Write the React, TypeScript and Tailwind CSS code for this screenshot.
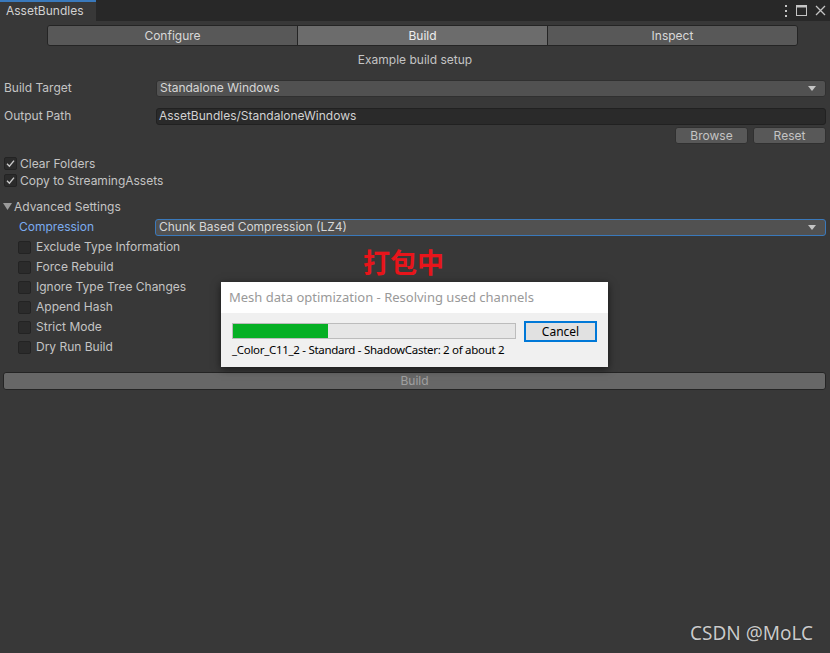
import React from "react";

function Check({ checked }: { checked?: boolean }) {
  return (
    <div className="flex h-[13px] w-[13px] items-center justify-center rounded-[2px] border border-[#232323] bg-[#2b2b2b]">
      {checked ? (
        <svg width="9" height="9" viewBox="0 0 9 9">
          <path d="M1 4.8 L3.4 7.2 L8 1.6" fill="none" stroke="#c8c8c8" strokeWidth="1.4" />
        </svg>
      ) : null}
    </div>
  );
}

function Arrow() {
  return (
    <svg width="8" height="5" viewBox="0 0 8 5" className="mr-[4px]">
      <path d="M0 0 H8 L4 5 Z" fill="#c4c4c4" />
    </svg>
  );
}

const options = [
  "Exclude Type Information",
  "Force Rebuild",
  "Ignore Type Tree Changes",
  "Append Hash",
  "Strict Mode",
  "Dry Run Build",
];

export default function App() {
  return (
    <div
      className="relative h-[653px] w-[830px] overflow-hidden bg-[#383838] text-[12px] text-[#c4c4c4]"
      style={{ fontFamily: "Inter, 'Liberation Sans', sans-serif" }}
    >
      {/* window tab bar */}
      <div className="flex h-[21px] items-stretch bg-[#282828]">
        <div className="w-[96px] border-t-2 border-[#3a79bb] bg-[#383838] pl-[6px] leading-[18px] text-[#d2d2d2]">
          AssetBundles
        </div>
        <div className="flex-1" />
        <div className="flex items-center gap-[8px] pr-[4px]">
          <svg width="4" height="12" viewBox="0 0 4 12">
            <rect x="1" y="0" width="2" height="2" fill="#c4c4c4" />
            <rect x="1" y="5" width="2" height="2" fill="#c4c4c4" />
            <rect x="1" y="10" width="2" height="2" fill="#c4c4c4" />
          </svg>
          <svg width="11" height="11" viewBox="0 0 11 11">
            <rect x="0.5" y="0.5" width="10" height="10" fill="none" stroke="#c4c4c4" />
            <rect x="0" y="0" width="11" height="2.5" fill="#c4c4c4" />
          </svg>
          <svg width="11" height="11" viewBox="0 0 11 11">
            <path d="M1 1 L10 10 M10 1 L1 10" stroke="#c4c4c4" strokeWidth="1.3" />
          </svg>
        </div>
      </div>

      {/* toolbar */}
      <div className="ml-[47px] mt-[4px] flex h-[21px] w-[751px] overflow-hidden rounded-[3px] border border-[#242424] text-[#d8d8d8]">
        <div className="flex flex-1 items-center justify-center bg-[#585858]">Configure</div>
        <div className="flex flex-1 items-center justify-center border-x border-[#242424] bg-[#6c6c6c] text-[#eeeeee]">
          Build
        </div>
        <div className="flex flex-1 items-center justify-center bg-[#585858]">Inspect</div>
      </div>

      <div className="mt-[4px] flex h-[20px] items-center justify-center">Example build setup</div>

      <div className="px-[4px]">
        <div className="mt-[10px] flex h-[16px] items-center">
          <div className="w-[152px]">Build Target</div>
          <div className="flex h-[17px] flex-1 items-center justify-between rounded-[3px] border border-[#303030] bg-[#515151] pl-[3px] pr-[5px] text-[#d6d6d6]">
            <span>Standalone Windows</span>
            <Arrow />
          </div>
        </div>

        <div className="mt-[12px] flex h-[16px] items-center">
          <div className="w-[152px]">Output Path</div>
          <div className="flex h-[17px] flex-1 items-center rounded-[3px] border border-[#212121] bg-[#2a2a2a] pl-[2px] text-[#d2d2d2]">
            AssetBundles/StandaloneWindows
          </div>
        </div>

        <div className="mt-[3px] flex h-[17px] justify-end gap-[5px]">
          <div className="flex w-[73px] items-center justify-center rounded-[3px] border border-[#303030] bg-[#585858]">
            Browse
          </div>
          <div className="flex w-[73px] items-center justify-center rounded-[3px] border border-[#303030] bg-[#585858]">
            Reset
          </div>
        </div>

        <div className="mt-[11px] flex h-[17px] items-center gap-[3px]">
          <Check checked />
          <span>Clear Folders</span>
        </div>
        <div className="flex h-[17px] items-center gap-[3px]">
          <Check checked />
          <span>Copy to StreamingAssets</span>
        </div>

        <div className="-ml-[1px] mt-[10px] flex h-[16px] items-center">
          <svg width="9" height="8" viewBox="0 0 9 8" className="mr-[2px]">
            <path d="M0 0 H9 L4.5 7 Z" fill="#9a9a9a" />
          </svg>
          <span>Advanced Settings</span>
        </div>

        <div className="mt-[4px] flex h-[16px] items-center">
          <div className="w-[151px] pl-[15px] text-[#7bacf0]">Compression</div>
          <div className="flex h-[17px] flex-1 items-center justify-between rounded-[3px] border border-[#3a79bb] bg-[#515151] pl-[3px] pr-[5px] text-[#d6d6d6]">
            <span>Chunk Based Compression (LZ4)</span>
            <Arrow />
          </div>
        </div>

        <div className="mt-[2px] pl-[14px]">
          {options.map((o) => (
            <div key={o} className="flex h-[20px] items-center gap-[5px]">
              <Check />
              <span>{o}</span>
            </div>
          ))}
        </div>

        <div className="-ml-[1px] mt-[15px] flex h-[18px] items-center justify-center rounded-[3px] border border-[#242424] bg-[#676767] text-[#a0a0a0]">
          Build
        </div>
      </div>

      {/* overlay label */}
      <div
        className="absolute left-[363px] top-[244px] text-[27px] font-bold leading-[36px] text-[#e8151b]"
        style={{ fontFamily: "'Noto Sans CJK SC', sans-serif" }}
      >
        打包中
      </div>

      {/* progress dialog */}
      <div
        className="absolute left-[221px] top-[282px] w-[387px] bg-[#f0f0f0] shadow-[0_2px_8px_rgba(0,0,0,0.6)]"
        style={{ fontFamily: "'Noto Sans', 'Liberation Sans', sans-serif" }}
      >
        <div className="flex h-[31px] items-center whitespace-nowrap bg-white pl-[8px] text-[13px] text-[#999999]">
          Mesh data optimization - Resolving used channels
        </div>
        <div className="flex h-[54px] pl-[11px] pr-[11px] pt-[8px]">
          <div className="flex-1">
            <div className="mt-[2px] h-[16px] w-[284px] border border-[#bcbcbc] bg-[#e6e6e6]">
              <div className="h-full w-[95px] bg-[#06b025]" />
            </div>
            <div className="mt-[3px] whitespace-nowrap text-[11.5px] leading-[16px] tracking-[-0.3px] text-black">
              _Color_C11_2 - Standard - ShadowCaster: 2 of about 2
            </div>
          </div>
          <div className="flex h-[21px] w-[73px] items-center justify-center border-2 border-[#0078d7] bg-[#e1e1e1] text-[12px] text-black">
            Cancel
          </div>
        </div>
      </div>

      {/* watermark */}
      <div
        className="absolute left-[690px] top-[619px] text-[19px] text-[#cacaca]"
        style={{ fontFamily: "'Noto Sans', sans-serif", textShadow: "0 0 1px rgba(0,0,0,0.5)" }}
      >
        CSDN @MoLC
      </div>
    </div>
  );
}
